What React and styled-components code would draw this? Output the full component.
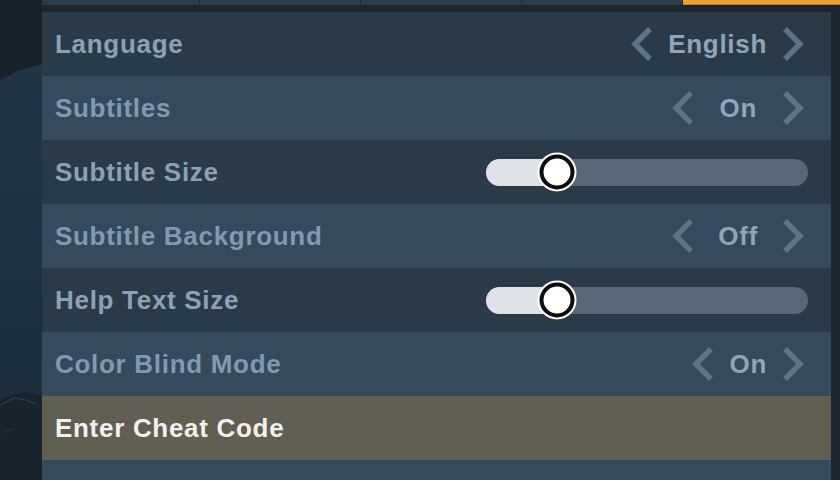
import React from "react";
import styled, { createGlobalStyle } from "styled-components";

const Global = createGlobalStyle`
  html, body { margin: 0; padding: 0; background: #1b2630; }
  body { width: 840px; height: 480px; overflow: hidden; font-family: "Liberation Sans", Arial, sans-serif; }
  #root { width: 840px; height: 480px; }
`;

const Page = styled.div`
  display: flex;
  width: 840px;
  height: 480px;
  background: #1b2630;
  overflow: hidden;
`;

const Scenery = styled.svg`
  flex: 0 0 42px;
  width: 42px;
  height: 480px;
  display: block;
`;

const Main = styled.div`
  flex: 1;
  display: flex;
  flex-direction: column;
  min-width: 0;
`;

const TabBar = styled.div`
  display: grid;
  grid-template-columns: 157px 160px 160px 160px 1fr;
  height: 5px;
  flex: 0 0 5px;
  background: #1e2a35;
  gap: 1px;
`;

const Tab = styled.div`
  background: ${(p) => (p.$active ? "#f2a22c" : "#2d3c49")};
  ${(p) => (p.$active ? "box-shadow: inset 0 -1px 0 #c57f1c;" : "")}
`;

const List = styled.div`
  display: flex;
  flex-direction: column;
  flex-shrink: 0;
  margin-top: 7px;
  margin-right: 9px;
`;

const Row = styled.div`
  display: flex;
  align-items: center;
  justify-content: space-between;
  height: 64px;
  flex: 0 0 64px;
  padding: 0 26px 0 13px;
  box-sizing: border-box;
  background: ${(p) =>
    p.$highlight ? "#615e52" : p.$light ? "#354a5c" : "#2b3a47"};
`;

const Label = styled.span`
  font-size: 26px;
  font-weight: 700;
  letter-spacing: 0.7px;
  color: ${(p) => (p.$highlight ? "#f1f1ee" : p.$light ? "#7f9bb0" : "#8ba2b5")};
`;

const Picker = styled.div`
  display: flex;
  align-items: center;
`;

const Value = styled.span`
  font-size: 26px;
  font-weight: 700;
  letter-spacing: 0.7px;
  color: #8ea6b8;
  padding: 0 ${(p) => p.$pad}px;
`;

const Chevron = styled.svg`
  width: 24px;
  height: 36px;
  display: block;
`;

const Track = styled.div`
  position: relative;
  width: 322px;
  height: 27px;
  margin-right: -3px;
  border-radius: 14px;
  background: #576776;
`;

const Fill = styled.div`
  height: 100%;
  border-radius: 14px 0 0 14px;
  background: #dfe3e7;
`;

const Thumb = styled.div`
  position: absolute;
  top: 50%;
  width: 35px;
  height: 35px;
  box-sizing: border-box;
  border-radius: 50%;
  background: #ffffff;
  border: 4.5px solid #0c0c0c;
  box-shadow: 0 0 0 2px #ffffff;
  transform: translate(-50%, -50%);
`;

const Left = () => (
  <Chevron viewBox="0 0 24 36">
    <polyline points="20,3 5,18 20,33" fill="none" stroke="#5d7487" strokeWidth="5.5" />
  </Chevron>
);

const Right = () => (
  <Chevron viewBox="0 0 24 36">
    <polyline points="4,3 19,18 4,33" fill="none" stroke="#5d7487" strokeWidth="5.5" />
  </Chevron>
);

const Slider = ({ value }) => (
  <Track>
    <Fill style={{ width: `${value * 100}%` }} />
    <Thumb style={{ left: `${value * 100}%` }} />
  </Track>
);

const rows = [
  { label: "Language", type: "pick", value: "English", pad: 14 },
  { label: "Subtitles", type: "pick", value: "On", pad: 24 },
  { label: "Subtitle Size", type: "slider", value: 0.22 },
  { label: "Subtitle Background", type: "pick", value: "Off", pad: 23 },
  { label: "Help Text Size", type: "slider", value: 0.22 },
  { label: "Color Blind Mode", type: "pick", value: "On", pad: 14 },
  { label: "Enter Cheat Code", type: "action", highlight: true },
  { label: "", type: "none" },
];

export default function App() {
  return (
    <>
      <Global />
      <Page>
        <Scenery viewBox="0 0 42 480" preserveAspectRatio="none">
          <defs>
            <linearGradient id="sky" x1="0" y1="0" x2="0" y2="1">
              <stop offset="0" stopColor="#223749" />
              <stop offset="0.5" stopColor="#1f3243" />
              <stop offset="1" stopColor="#1b2b38" />
            </linearGradient>
          </defs>
          <rect x="0" y="0" width="42" height="480" fill="url(#sky)" />
          <polygon points="0,0 42,0 42,64 20,70 0,80" fill="#162129" />
          <polygon points="0,400 14,394 28,392 42,396 42,480 0,480" fill="#17232d" />
          <polyline points="0,405 14,398 26,400 36,404" fill="none" stroke="#2b3a46" strokeWidth="1.5" />
          <polyline points="4,432 16,428" fill="none" stroke="#24323e" strokeWidth="1" />
        </Scenery>
        <Main>
          <TabBar>
            <Tab />
            <Tab />
            <Tab />
            <Tab />
            <Tab $active />
          </TabBar>
          <List>
            {rows.map((r, i) => {
              const light = i % 2 === 1;
              return (
                <Row key={i} $light={light} $highlight={r.highlight}>
                  <Label $light={light} $highlight={r.highlight}>
                    {r.label}
                  </Label>
                  {r.type === "pick" && (
                    <Picker>
                      <Left />
                      <Value $pad={r.pad}>{r.value}</Value>
                      <Right />
                    </Picker>
                  )}
                  {r.type === "slider" && <Slider value={r.value} />}
                </Row>
              );
            })}
          </List>
        </Main>
      </Page>
    </>
  );
}
